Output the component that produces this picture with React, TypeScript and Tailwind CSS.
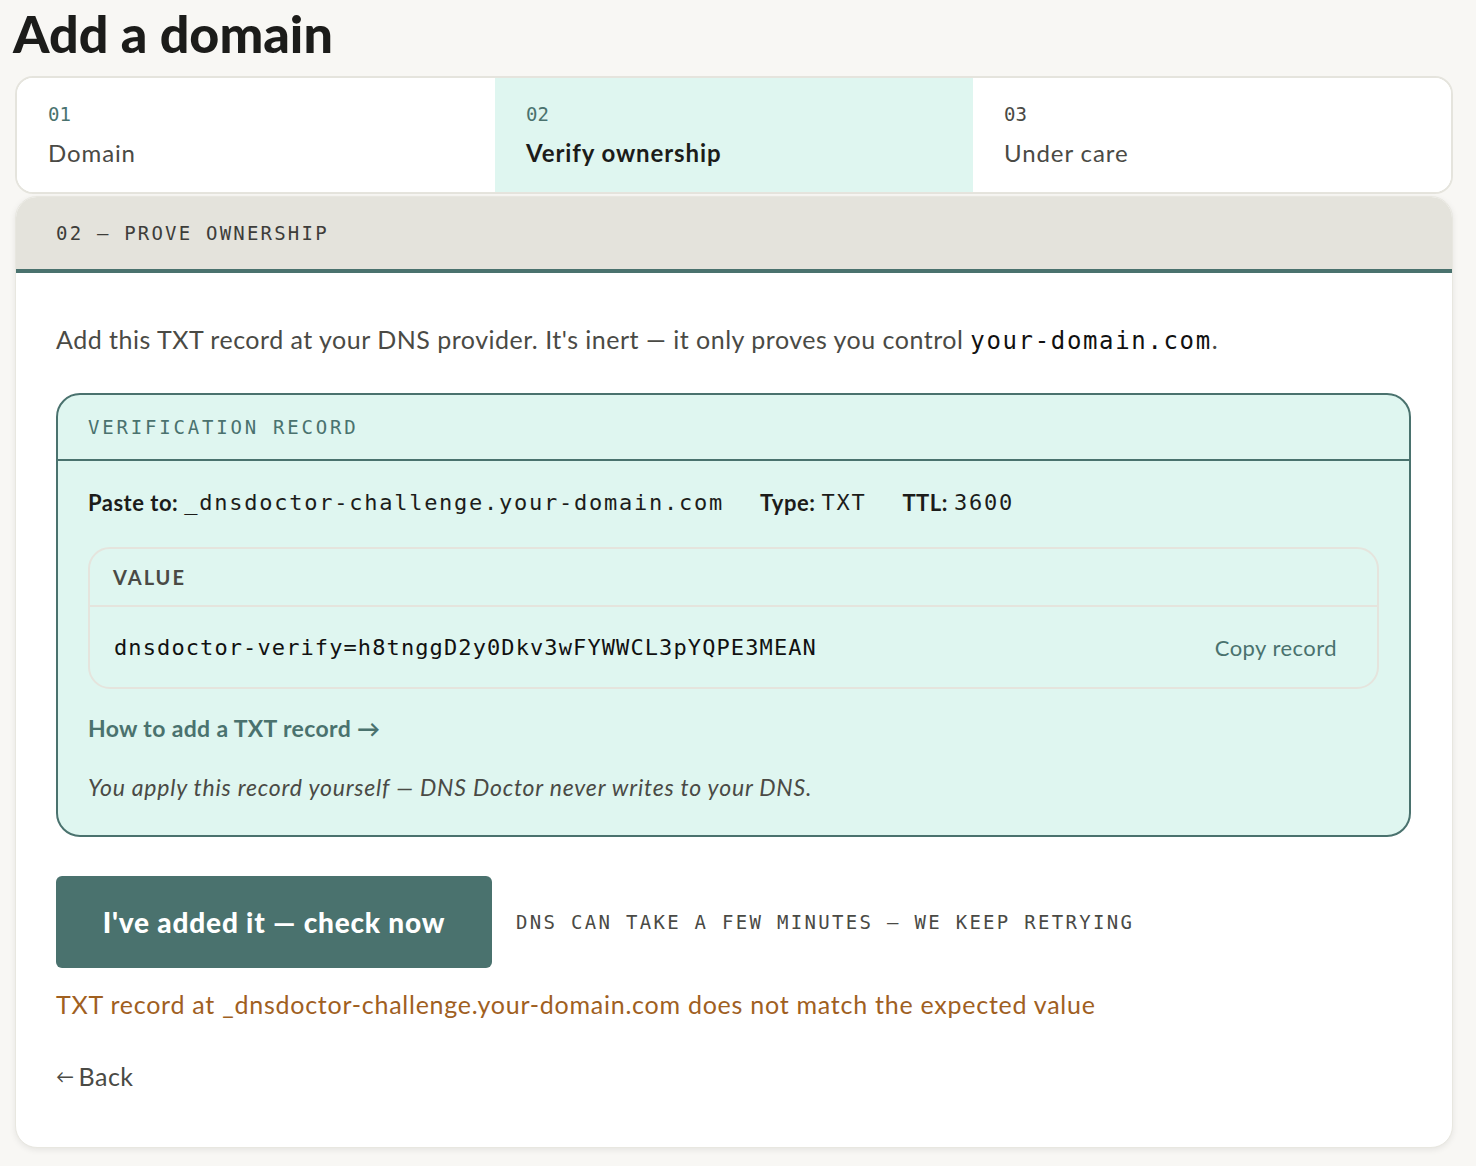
import React from "react";

const sans = { fontFamily: "Lato, 'Noto Sans', sans-serif" };
const mono = { fontFamily: "'DejaVu Sans Mono', 'Liberation Mono', monospace" };

function Step({ n, label, active }: { n: string; label: string; active?: boolean }) {
  return (
    <div className={`flex-1 flex flex-col justify-center pl-[31px] ${active ? "bg-[#dff6f0]" : "bg-white"}`}>
      <div className={`text-[19px] leading-none ${active || n === "01" ? "text-[#4a726e]" : "text-[#4a4a45]"}`} style={mono}>
        {n}
      </div>
      <div className={`mt-[17px] text-[24px] leading-none tracking-[0.9px] ${active ? "font-bold text-[#1c1c1a]" : "text-[#4a4a45]"}`}>
        {label}
      </div>
    </div>
  );
}

export default function App() {
  return (
    <div className="min-h-[1166px] bg-[#f8f7f4] px-[15px] pb-[18px]" style={sans}>
      <h1 className="text-[52px] leading-none font-black text-[#1c1c1a] pt-[7px] ml-[-2px] h-[69px]">
        Add a domain
      </h1>
      <div className="mt-[7px] flex h-[118px] w-[1438px] rounded-[18px] border-2 border-[#e5e4dd] overflow-hidden bg-white">
        <Step n="01" label="Domain" />
        <Step n="02" label="Verify ownership" active />
        <Step n="03" label="Under care" />
      </div>
      <div className="mt-[2px] w-[1438px] rounded-[22px] overflow-hidden bg-white shadow-[0_2px_6px_rgba(0,0,0,0.08)] border border-[#e8e7e0]">
        <div className="h-[76px] bg-[#e4e3dc] border-b-4 border-[#4a726e] flex items-center pl-[40px]">
          <span className="text-[19px] tracking-[2.2px] text-[#3d3d3a]" style={mono}>
            02 — PROVE OWNERSHIP
          </span>
        </div>
        <div className="pl-[40px] pr-[41px] pt-[50px] pb-[52px]">
          <p className="text-[25px] leading-[32px] text-[#4a4a45] tracking-[0.5px]">
            Add this TXT record at your DNS provider. It's inert — it only proves you control{" "}
            <span className="text-[#111] text-[24px] tracking-[1.65px]" style={mono}>your-domain.com</span>.
          </p>
          <div className="mt-[36px] rounded-[24px] border-2 border-[#4a726e] bg-[#dff6f0]">
            <div className="h-[66px] border-b-2 border-[#4a726e] flex items-center pl-[30px]">
              <span className="text-[19px] tracking-[2.8px] text-[#4a726e]" style={mono}>VERIFICATION RECORD</span>
            </div>
            <div className="px-[30px] pt-[24px] pb-[31px]">
              <div className="flex items-center text-[22px] text-[#1c1c1a] h-[34px]">
                <span className="font-bold tracking-[0.5px]">Paste to:</span>
                <span className="ml-[6px] tracking-[1.75px]" style={mono}>_dnsdoctor-challenge.your-domain.com</span>
                <span className="font-bold ml-[36px] tracking-[0.5px]">Type:</span>
                <span className="ml-[6px] tracking-[1.75px]" style={mono}>TXT</span>
                <span className="font-bold ml-[36px] tracking-[0.5px]">TTL:</span>
                <span className="ml-[6px] tracking-[1.75px]" style={mono}>3600</span>
              </div>
              <div className="mt-[28px] rounded-[22px] border-2 border-[#e5e4dd]">
                <div className="h-[58px] border-b-2 border-[#e5e4dd] flex items-center pl-[23px]">
                  <span className="text-[20px] font-bold tracking-[2px] text-[#4a4a45]">VALUE</span>
                </div>
                <div className="h-[80px] flex items-center justify-between pl-[24px] pr-[40px]">
                  <span className="text-[22px] text-[#111] tracking-[1.1px]" style={mono}>dnsdoctor-verify=h8tnggD2y0Dkv3wFYWWCL3pYQPE3MEAN</span>
                  <span className="text-[22px] text-[#4a726e] tracking-[0.45px]">Copy record</span>
                </div>
              </div>
              <div className="mt-[22px] text-[23px] font-bold text-[#4a726e] tracking-[0.35px]">How to add a TXT record →</div>
              <div className="mt-[24px] text-[23px] italic text-[#4a4a45] tracking-[0.8px]">
                You apply this record yourself — DNS Doctor never writes to your DNS.
              </div>
            </div>
          </div>
          <div className="mt-[39px] flex items-center">
            <button className="h-[92px] w-[436px] rounded-[6px] bg-[#4a726e] text-white text-[28px] font-black tracking-[0.8px]">
              I've added it — check now
            </button>
            <span className="ml-[24px] text-[19px] tracking-[2.3px] text-[#4a4a45]" style={mono}>
              DNS CAN TAKE A FEW MINUTES — WE KEEP RETRYING
            </span>
          </div>
          <div className="mt-[18px] text-[25px] text-[#a0601f] tracking-[0.75px]">
            TXT record at _dnsdoctor-challenge.your-domain.com does not match the expected value
          </div>
          <div className="mt-[34px] text-[25px] text-[#4a4a45] flex items-center tracking-[0.5px]">
            <span className="text-[18px] mr-[4px]">←</span>Back
          </div>
        </div>
      </div>
    </div>
  );
}
